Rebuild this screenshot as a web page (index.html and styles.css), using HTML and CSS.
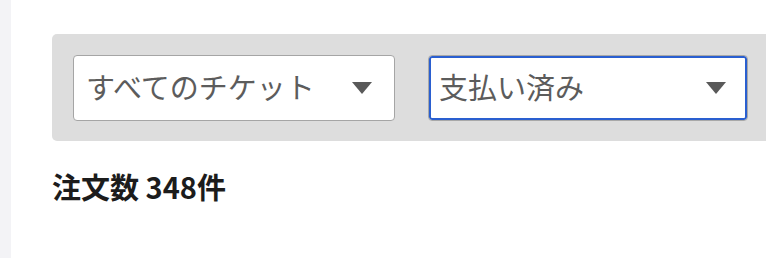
FILE: index.html
```html
<!DOCTYPE html>
<html lang="ja">
<head>
<meta charset="utf-8">
<link rel="stylesheet" href="styles.css">
</head>
<body>
<div class="layout">
  <aside class="sidebar"></aside>
  <main class="main">
    <div class="filters">
      <div class="select">
        <span class="select-label">すべてのチケット</span>
        <span class="caret"></span>
      </div>
      <div class="select select-focused">
        <span class="select-label">支払い済み</span>
        <span class="caret"></span>
      </div>
    </div>
    <h2 class="count">注文数 348件</h2>
  </main>
</div>
</body>
</html>
```
FILE: styles.css
```css
html, body {
  margin: 0;
  padding: 0;
  background: #ffffff;
  font-family: "Noto Sans CJK JP", "Noto Sans", sans-serif;
}
.layout {
  display: flex;
  width: 766px;
  height: 258px;
  overflow: hidden;
}
.sidebar {
  flex: 0 0 11px;
  background: #f3f3f6;
}
.main {
  flex: 1;
  padding: 34px 0 0 41px;
  min-width: 0;
}
.filters {
  display: flex;
  gap: 33px;
  width: 760px;
  box-sizing: border-box;
  padding: 21px 21px 20px 21px;
  background: #dddddd;
  border-radius: 5px;
}
.select {
  flex: 0 0 auto;
  width: 322px;
  height: 66px;
  box-sizing: border-box;
  border: 1px solid #a5a5a5;
  border-radius: 4px;
  background: #ffffff;
  display: flex;
  align-items: center;
  justify-content: space-between;
  padding: 0 22px 0 12px;
}
.select-focused {
  width: 320px;
  border-color: #a8a8a8;
  box-shadow: inset 0 0 0 2px #2a5fd0;
  padding-left: 10px;
  padding-right: 21px;
}
.select-label {
  font-size: 29px;
  line-height: 1;
  color: #5c5c5c;
  margin-top: -4px;
}
.caret {
  width: 0;
  height: 0;
  border-left: 10px solid transparent;
  border-right: 10px solid transparent;
  border-top: 12px solid #595959;
}
.count {
  margin: 28px 0 0 0;
  font-size: 29px;
  line-height: 34px;
  font-weight: 700;
  color: #1c1c1c;
}
```
